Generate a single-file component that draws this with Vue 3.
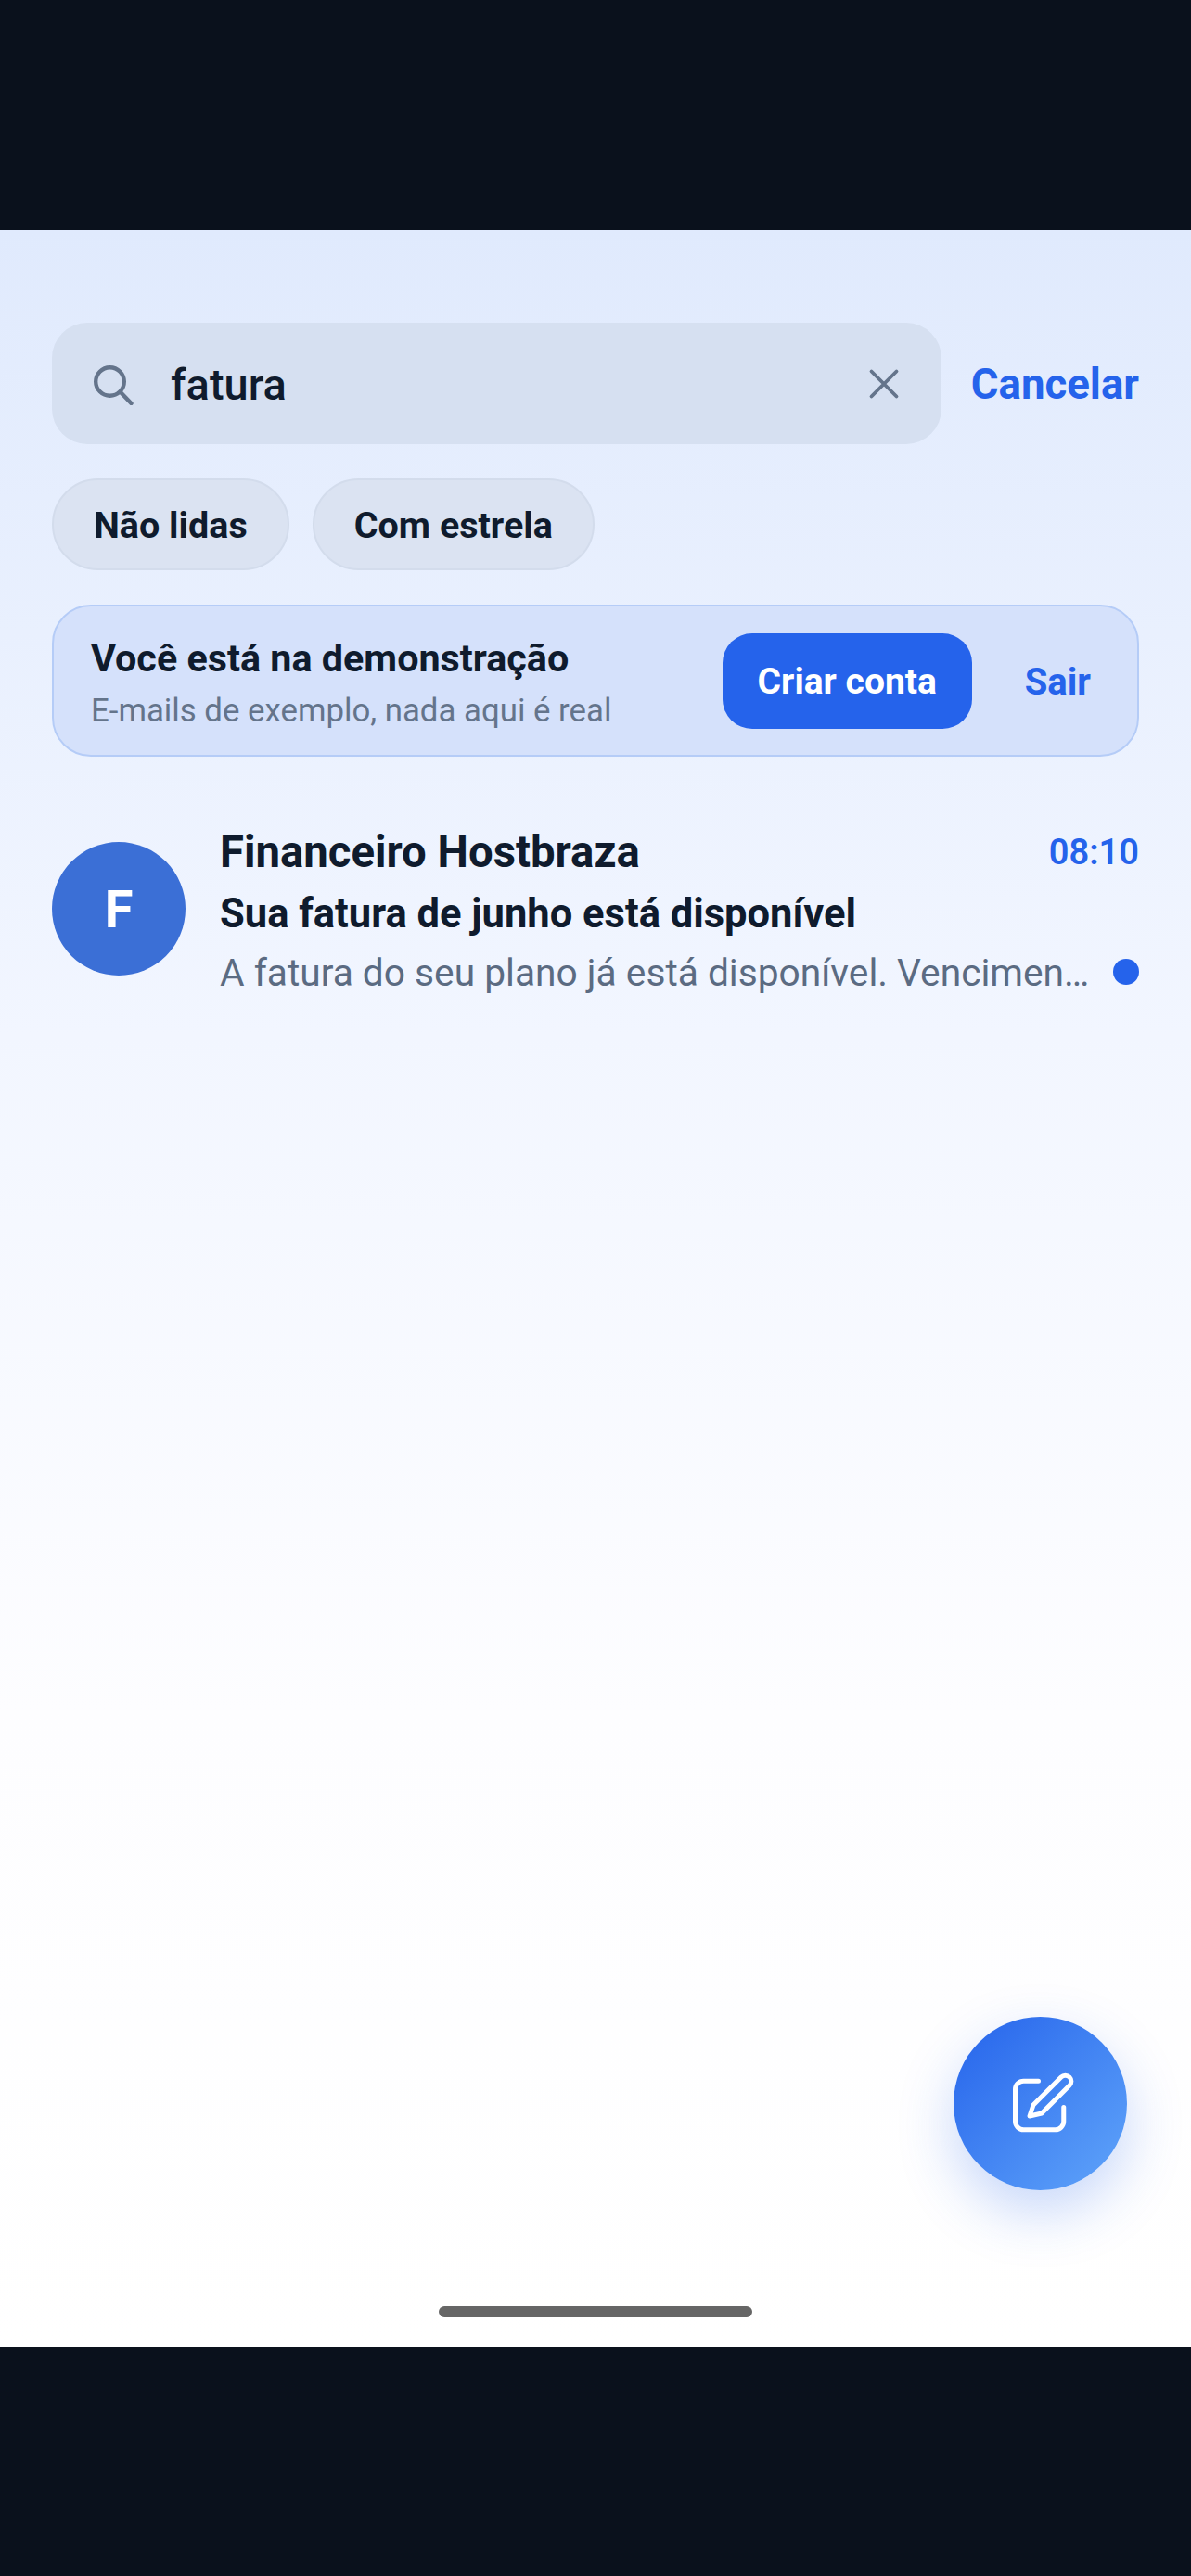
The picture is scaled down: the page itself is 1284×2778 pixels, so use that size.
<script setup>
const chips = ['Não lidas', 'Com estrela']
</script>

<template>
  <div class="page">
    <div class="bar"></div>
    <main class="screen">
      <div class="search-row">
        <div class="search">
          <svg class="ico-search" viewBox="0 0 46 46" fill="none" stroke="#64748b" stroke-width="4.4" stroke-linecap="round">
            <circle cx="17.500" cy="20.500" r="15.300"/>
            <path d="M29 32l11.500 12"/>
          </svg>
          <span class="query">fatura</span>
          <svg class="ico-x" viewBox="0 0 36 36" fill="none" stroke="#64748b" stroke-width="3.800" stroke-linecap="round">
            <path d="M4.500 4.500l27 27M31.500 4.500l-27 27"/>
          </svg>
        </div>
        <span class="cancel">Cancelar</span>
      </div>
      <div class="chips">
        <span v-for="c in chips" :key="c" class="chip">{{ c }}</span>
      </div>
      <section class="banner">
        <div class="banner-text">
          <div class="banner-title">Você está na demonstração</div>
          <div class="banner-sub">E-mails de exemplo, nada aqui é real</div>
        </div>
        <span class="cta">Criar conta</span>
        <span class="exit">Sair</span>
      </section>
      <article class="mail">
        <div class="avatar">F</div>
        <div class="mail-body">
          <div class="line">
            <span class="sender">Financeiro Hostbraza</span>
            <span class="time">08:10</span>
          </div>
          <div class="subject">Sua fatura de junho está disponível</div>
          <div class="line">
            <span class="preview">A fatura do seu plano já está disponível. Vencimen…</span>
            <span class="dot"></span>
          </div>
        </div>
      </article>
      <button class="fab" aria-label="Escrever">
        <svg viewBox="-1 -1 72 72" fill="none" stroke="#fff" stroke-width="5" stroke-linecap="round" stroke-linejoin="round">
          <path d="M32.500 10.250H16.500a9 9 0 0 0-9 9v34.500a9 9 0 0 0 9 9h34.250a9 9 0 0 0 9-9V38.500"/>
          <path d="M57 6A6.360 6.360 0 0 1 66 15L36 45L23 48L27 36Z"/>
        </svg>
      </button>
      <div class="home"></div>
    </main>
    <div class="bar bar-bottom"></div>
  </div>
</template>

<style>
html, body { margin: 0; background: #0a111c; }
</style>

<style scoped>
.page {
  width: 1284px;
  height: 2778px;
  display: flex;
  flex-direction: column;
  overflow: hidden;
  font-family: Roboto, "Liberation Sans", sans-serif;
  color: #0f172a;
}
.bar { height: 248px; background: #0a111c; flex: none; }
.bar-bottom { flex: 1; height: auto; }
.screen {
  position: relative;
  height: 2283px;
  flex: none;
  box-sizing: border-box;
  padding: 100px 56px 0;
  background: linear-gradient(180deg, #e0eafd 0%, #f2f6ff 38%, #fdfdff 70%, #fff 100%);
}
.search-row { display: flex; align-items: center; justify-content: space-between; }
.search {
  width: 959px;
  height: 131px;
  box-sizing: border-box;
  border-radius: 38px;
  background: #d6e0f1;
  display: flex;
  align-items: center;
  padding: 0 44px 0 45px;
}
.ico-search { width: 46px; height: 46px; flex: none; }
.query {
  margin-left: 37px;
  flex: 1;
  font-size: 47px;
  font-weight: 500;
  line-height: 56px;
  padding-top: 2px;
  color: #0f1b2d;
}
.ico-x { width: 36px; height: 36px; flex: none; }
.cancel { font-size: 45.600px; font-weight: 700; line-height: 56px; padding-top: 3px; color: #2563eb; white-space: nowrap; }
.chips { display: flex; gap: 25px; margin-top: 37px; }
.chip {
  height: 99px;
  box-sizing: border-box;
  padding: 2px 43px 0;
  display: flex;
  align-items: center;
  border-radius: 50px;
  border: 2px solid #d3dcec;
  background: #dbe3f2;
  font-size: 39.500px;
  font-weight: 700;
  color: #0f1b2d;
}
.banner {
  margin-top: 37px;
  height: 164px;
  box-sizing: border-box;
  border: 2px solid #b5ccf7;
  border-radius: 42px;
  background: #d5e1fb;
  display: flex;
  align-items: center;
  padding: 0 50px 0 40px;
}
.banner-text { flex: 1; padding-top: 9px; }
.banner-title { font-size: 41.300px; font-weight: 700; line-height: 52px; color: #0f1b2d; }
.banner-sub { margin-top: 3px; font-size: 34.800px; line-height: 54px; color: #64748b; }
.cta {
  width: 269px;
  height: 103px;
  box-sizing: border-box;
  padding-top: 2px;
  border-radius: 32px;
  background: #2563eb;
  color: #fff;
  font-size: 39px;
  font-weight: 700;
  display: flex;
  align-items: center;
  justify-content: center;
}
.exit { margin-left: 57px; padding-top: 2px; font-size: 40px; font-weight: 700; color: #2563eb; }
.mail { display: flex; align-items: flex-start; gap: 37px; margin-top: 71px; }
.avatar {
  width: 144px;
  height: 144px;
  flex: none;
  margin-top: 21px;
  box-sizing: border-box;
  padding-top: 2px;
  border-radius: 50%;
  background: #3b6fd6;
  color: #fff;
  font-size: 56px;
  font-weight: 700;
  display: flex;
  align-items: center;
  justify-content: center;
}
.mail-body { flex: 1; min-width: 0; }
.line { display: flex; align-items: center; justify-content: space-between; }
.sender { font-size: 47.300px; font-weight: 700; line-height: 64px; color: #0f1b2d; }
.time { font-size: 38px; font-weight: 600; color: #2563eb; }
.subject { margin-top: 4px; font-size: 43.500px; font-weight: 700; line-height: 62px; color: #0f1b2d; }
.preview {
  font-size: 40.700px;
  line-height: 64px;
  color: #5b6b82;
  white-space: nowrap;
}
.dot { width: 28px; height: 28px; flex: none; margin-top: -3px; border-radius: 50%; background: #2563eb; }
.fab {
  position: absolute;
  left: 1028px;
  top: 1927px;
  width: 187px;
  height: 187px;
  border: none;
  padding: 0;
  border-radius: 50%;
  background: linear-gradient(135deg, #2563eb, #60a5fa);
  box-shadow: 0 24px 60px rgba(37, 99, 235, 0.25);
  display: flex;
  align-items: center;
  justify-content: center;
}
.fab svg { width: 72px; height: 72px; }
.home {
  position: absolute;
  left: 473px;
  top: 2239px;
  width: 338px;
  height: 12px;
  border-radius: 6px;
  background: #666;
}
</style>
